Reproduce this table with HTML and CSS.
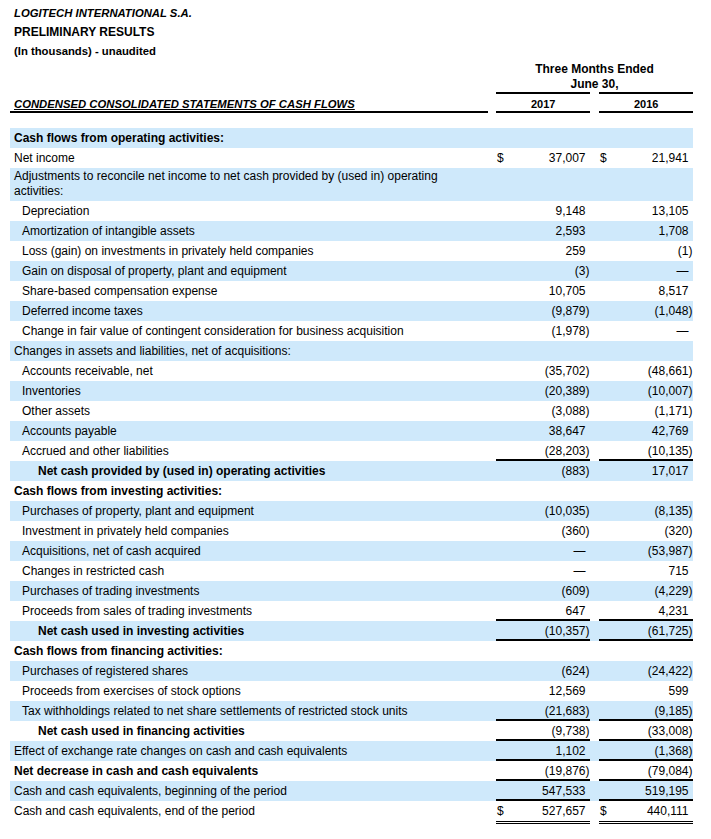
FILE: index.html
```html
<!DOCTYPE html>
<html>
<head>
<meta charset="utf-8">
<link rel="stylesheet" href="styles.css">
</head>
<body>
<div class="page">
  <div class="hdr">
    <div class="h1">LOGITECH INTERNATIONAL S.A.</div>
    <div class="h2">PRELIMINARY RESULTS</div>
    <div class="h3">(In thousands) - unaudited</div>
  </div>
  <div class="hrow period">
    <div class="lbl"></div><div class="g1"></div>
    <div class="span">Three Months Ended<br>June 30,</div>
  </div>
  <div class="hrow years">
    <div class="lbl title"><span>CONDENSED CONSOLIDATED STATEMENTS OF CASH FLOWS</span></div><div class="g1"></div>
    <div class="c yr">2017</div><div class="g2"></div>
    <div class="c yr">2016</div>
  </div>

  <div class="tbl">
    <div class="row b"><div class="lbl">Cash flows from operating activities:</div></div>
    <div class="row"><div class="lbl">Net income</div><div class="g1"></div><div class="c"><span class="d">$</span><span class="p">37,007</span></div><div class="g2"></div><div class="c"><span class="d">$</span><span class="p">21,941</span></div></div>
    <div class="row tall"><div class="lbl">Adjustments to reconcile net income to net cash provided by (used in) operating<br>activities:</div></div>
    <div class="row"><div class="lbl i1">Depreciation</div><div class="g1"></div><div class="c"><span class="p">9,148</span></div><div class="g2"></div><div class="c"><span class="p">13,105</span></div></div>
    <div class="row"><div class="lbl i1">Amortization of intangible assets</div><div class="g1"></div><div class="c"><span class="p">2,593</span></div><div class="g2"></div><div class="c"><span class="p">1,708</span></div></div>
    <div class="row"><div class="lbl i1">Loss (gain) on investments in privately held companies</div><div class="g1"></div><div class="c"><span class="p">259</span></div><div class="g2"></div><div class="c"><span>(1)</span></div></div>
    <div class="row"><div class="lbl i1">Gain on disposal of property, plant and equipment</div><div class="g1"></div><div class="c"><span>(3)</span></div><div class="g2"></div><div class="c"><span class="p">—</span></div></div>
    <div class="row"><div class="lbl i1">Share-based compensation expense</div><div class="g1"></div><div class="c"><span class="p">10,705</span></div><div class="g2"></div><div class="c"><span class="p">8,517</span></div></div>
    <div class="row"><div class="lbl i1">Deferred income taxes</div><div class="g1"></div><div class="c"><span>(9,879)</span></div><div class="g2"></div><div class="c"><span>(1,048)</span></div></div>
    <div class="row"><div class="lbl i1">Change in fair value of contingent consideration for business acquisition</div><div class="g1"></div><div class="c"><span>(1,978)</span></div><div class="g2"></div><div class="c"><span class="p">—</span></div></div>
    <div class="row"><div class="lbl">Changes in assets and liabilities, net of acquisitions:</div></div>
    <div class="row"><div class="lbl i1">Accounts receivable, net</div><div class="g1"></div><div class="c"><span>(35,702)</span></div><div class="g2"></div><div class="c"><span>(48,661)</span></div></div>
    <div class="row"><div class="lbl i1">Inventories</div><div class="g1"></div><div class="c"><span>(20,389)</span></div><div class="g2"></div><div class="c"><span>(10,007)</span></div></div>
    <div class="row"><div class="lbl i1">Other assets</div><div class="g1"></div><div class="c"><span>(3,088)</span></div><div class="g2"></div><div class="c"><span>(1,171)</span></div></div>
    <div class="row"><div class="lbl i1">Accounts payable</div><div class="g1"></div><div class="c"><span class="p">38,647</span></div><div class="g2"></div><div class="c"><span class="p">42,769</span></div></div>
    <div class="row"><div class="lbl i1">Accrued and other liabilities</div><div class="g1"></div><div class="c u"><span>(28,203)</span></div><div class="g2"></div><div class="c u"><span>(10,135)</span></div></div>
    <div class="row"><div class="lbl i2 b">Net cash provided by (used in) operating activities</div><div class="g1"></div><div class="c"><span>(883)</span></div><div class="g2"></div><div class="c"><span class="p">17,017</span></div></div>
    <div class="row"><div class="lbl b">Cash flows from investing activities:</div></div>
    <div class="row"><div class="lbl i1">Purchases of property, plant and equipment</div><div class="g1"></div><div class="c"><span>(10,035)</span></div><div class="g2"></div><div class="c"><span>(8,135)</span></div></div>
    <div class="row"><div class="lbl i1">Investment in privately held companies</div><div class="g1"></div><div class="c"><span>(360)</span></div><div class="g2"></div><div class="c"><span>(320)</span></div></div>
    <div class="row"><div class="lbl i1">Acquisitions, net of cash acquired</div><div class="g1"></div><div class="c"><span class="p">—</span></div><div class="g2"></div><div class="c"><span>(53,987)</span></div></div>
    <div class="row"><div class="lbl i1">Changes in restricted cash</div><div class="g1"></div><div class="c"><span class="p">—</span></div><div class="g2"></div><div class="c"><span class="p">715</span></div></div>
    <div class="row"><div class="lbl i1">Purchases of trading investments</div><div class="g1"></div><div class="c"><span>(609)</span></div><div class="g2"></div><div class="c"><span>(4,229)</span></div></div>
    <div class="row"><div class="lbl i1">Proceeds from sales of trading investments</div><div class="g1"></div><div class="c u"><span class="p">647</span></div><div class="g2"></div><div class="c u"><span class="p">4,231</span></div></div>
    <div class="row"><div class="lbl i2 b">Net cash used in investing activities</div><div class="g1"></div><div class="c u"><span>(10,357)</span></div><div class="g2"></div><div class="c u"><span>(61,725)</span></div></div>
    <div class="row"><div class="lbl b">Cash flows from financing activities:</div></div>
    <div class="row"><div class="lbl i1">Purchases of registered shares</div><div class="g1"></div><div class="c"><span>(624)</span></div><div class="g2"></div><div class="c"><span>(24,422)</span></div></div>
    <div class="row"><div class="lbl i1">Proceeds from exercises of stock options</div><div class="g1"></div><div class="c"><span class="p">12,569</span></div><div class="g2"></div><div class="c"><span class="p">599</span></div></div>
    <div class="row"><div class="lbl i1">Tax withholdings related to net share settlements of restricted stock units</div><div class="g1"></div><div class="c u"><span>(21,683)</span></div><div class="g2"></div><div class="c u"><span>(9,185)</span></div></div>
    <div class="row"><div class="lbl i2 b">Net cash used in financing activities</div><div class="g1"></div><div class="c u"><span>(9,738)</span></div><div class="g2"></div><div class="c u"><span>(33,008)</span></div></div>
    <div class="row"><div class="lbl">Effect of exchange rate changes on cash and cash equivalents</div><div class="g1"></div><div class="c u"><span class="p">1,102</span></div><div class="g2"></div><div class="c u"><span>(1,368)</span></div></div>
    <div class="row"><div class="lbl b">Net decrease in cash and cash equivalents</div><div class="g1"></div><div class="c u"><span>(19,876)</span></div><div class="g2"></div><div class="c u"><span>(79,084)</span></div></div>
    <div class="row"><div class="lbl">Cash and cash equivalents, beginning of the period</div><div class="g1"></div><div class="c u"><span class="p">547,533</span></div><div class="g2"></div><div class="c u"><span class="p">519,195</span></div></div>
    <div class="row last"><div class="lbl">Cash and cash equivalents, end of the period</div><div class="g1"></div><div class="c dbl"><span class="d">$</span><span class="p">527,657</span></div><div class="g2"></div><div class="c dbl"><span class="d">$</span><span class="p">440,111</span></div></div>
  </div>
</div>
</body>
</html>
```

FILE: styles.css
```css
html, body {
  margin: 0;
  padding: 0;
  background: #fff;
}
body {
  font-family: "Liberation Sans", Arial, sans-serif;
  color: #000;
}
.page {
  width: 683px;
  padding-left: 10px;
}
.hdr {
  padding-left: 4px;
  padding-top: 4px;
  font-weight: bold;
}
.h1 {
  font-size: 11.3px;
  font-style: italic;
  line-height: 19px;
}
.h2 {
  font-size: 12px;
  line-height: 19px;
}
.h3 {
  font-size: 11.3px;
  line-height: 18px;
}
.hrow {
  display: flex;
  font-size: 11px;
  font-weight: bold;
}
.period {
  margin-top: 2px;
  line-height: 15px;
  height: 30px;
  font-size: 12px;
}
.period .span {
  width: 197px;
  text-align: center;
}
.years {
  height: 21px;
  box-sizing: border-box;
}
.years .lbl, .years .c {
  box-sizing: border-box;
  height: 21px;
  line-height: 14px;
}
.years .title {
  padding-top: 5px;
  padding-left: 4px;
  font-style: italic;
  font-size: 11.3px;
  border-bottom: 2px solid #000;
}
.years .title span {
  text-decoration: underline;
}
.years .yr {
  border-top: 2px solid #000;
  border-bottom: 2px solid #000;
  padding-top: 3px;
  justify-content: center;
}
.lbl {
  flex: 0 0 478px;
  width: 478px;
  box-sizing: border-box;
  padding-left: 4px;
}
.g1 { flex: 0 0 8px; }
.g2 { flex: 0 0 9px; }
.c {
  flex: 0 0 94px;
  width: 94px;
  box-sizing: border-box;
  display: flex;
  justify-content: flex-end;
  padding: 0 0.5px 0 1px;
}
.d { margin-right: auto; }
.p { padding-right: 4px; }

.tbl {
  margin-top: 15px;
  font-size: 12px;
}
.row {
  display: flex;
  height: 20px;
  line-height: 20px;
  white-space: nowrap;
}
.row:nth-child(odd) {
  background: #cfe9fb;
}
.row.tall {
  height: 33px;
  line-height: 15px;
  white-space: normal;
}
.row.tall .lbl {
  padding-top: 1px;
}
.b { font-weight: bold; }
.i1 { padding-left: 12px; }
.i2 { padding-left: 28px; }
.u {
  border-bottom: 2px solid #000;
}
.row.last {
  height: 23px;
}
.dbl {
  height: 23px;
  border-bottom: 3px double #000;
}
```
